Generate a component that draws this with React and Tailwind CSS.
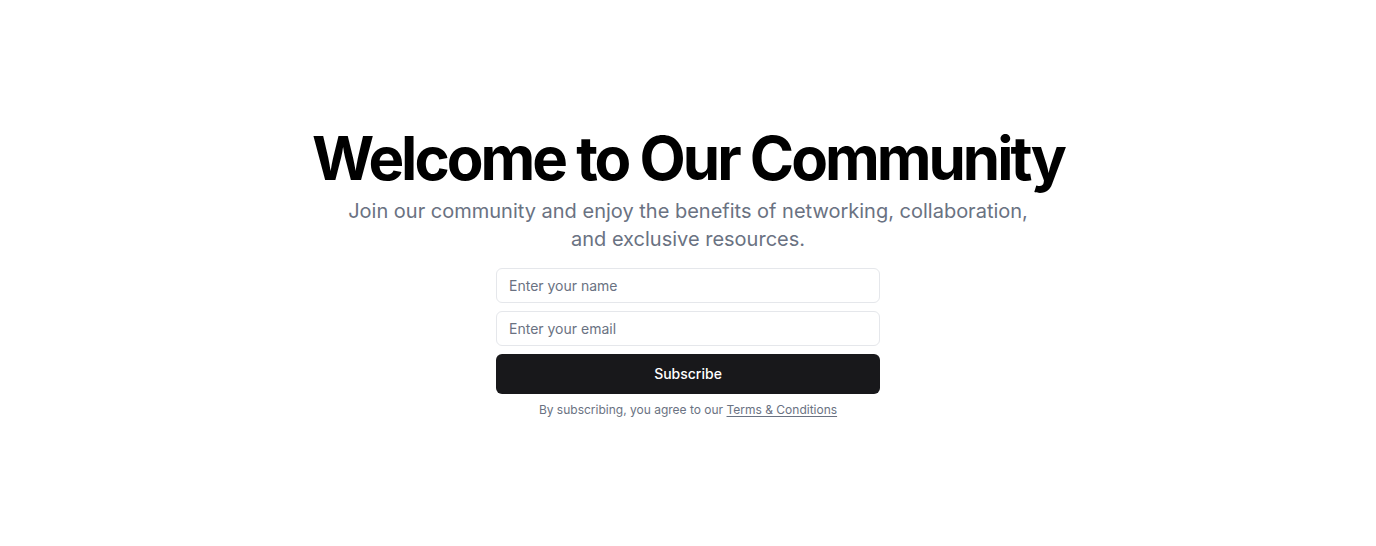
import React from 'react'

export default function App() {
  return (
    <div
      className="flex min-h-screen w-full items-center justify-center bg-white"
      style={{ fontFamily: 'Inter, "Noto Sans", sans-serif' }}
    >
      <div className="flex flex-col items-center gap-[15px] px-4 text-center">
        <div className="flex flex-col gap-[9px]">
          <h1 className="text-6xl font-bold tracking-tighter text-black">Welcome to Our Community</h1>
          <p className="mx-auto max-w-[700px] text-xl text-gray-500">
            Join our community and enjoy the benefits of networking, collaboration, and exclusive resources.
          </p>
        </div>
        <div className="w-full max-w-sm space-y-2">
          <form className="flex flex-col gap-2">
            <input
              className="h-[35px] w-full rounded-md border border-gray-200 bg-white px-3 text-sm text-gray-900 placeholder:text-gray-500 focus:outline-none"
              placeholder="Enter your name"
              type="text"
            />
            <input
              className="h-[35px] w-full rounded-md border border-gray-200 bg-white px-3 text-sm text-gray-900 placeholder:text-gray-500 focus:outline-none"
              placeholder="Enter your email"
              type="email"
            />
            <button
              className="h-10 w-full rounded-md bg-[#18181b] text-sm font-medium text-white"
              type="submit"
            >
              Subscribe
            </button>
          </form>
          <p className="text-xs text-gray-500">
            By subscribing, you agree to our{' '}
            <a className="underline underline-offset-2" href="#">
              Terms &amp; Conditions
            </a>
          </p>
        </div>
      </div>
    </div>
  )
}
